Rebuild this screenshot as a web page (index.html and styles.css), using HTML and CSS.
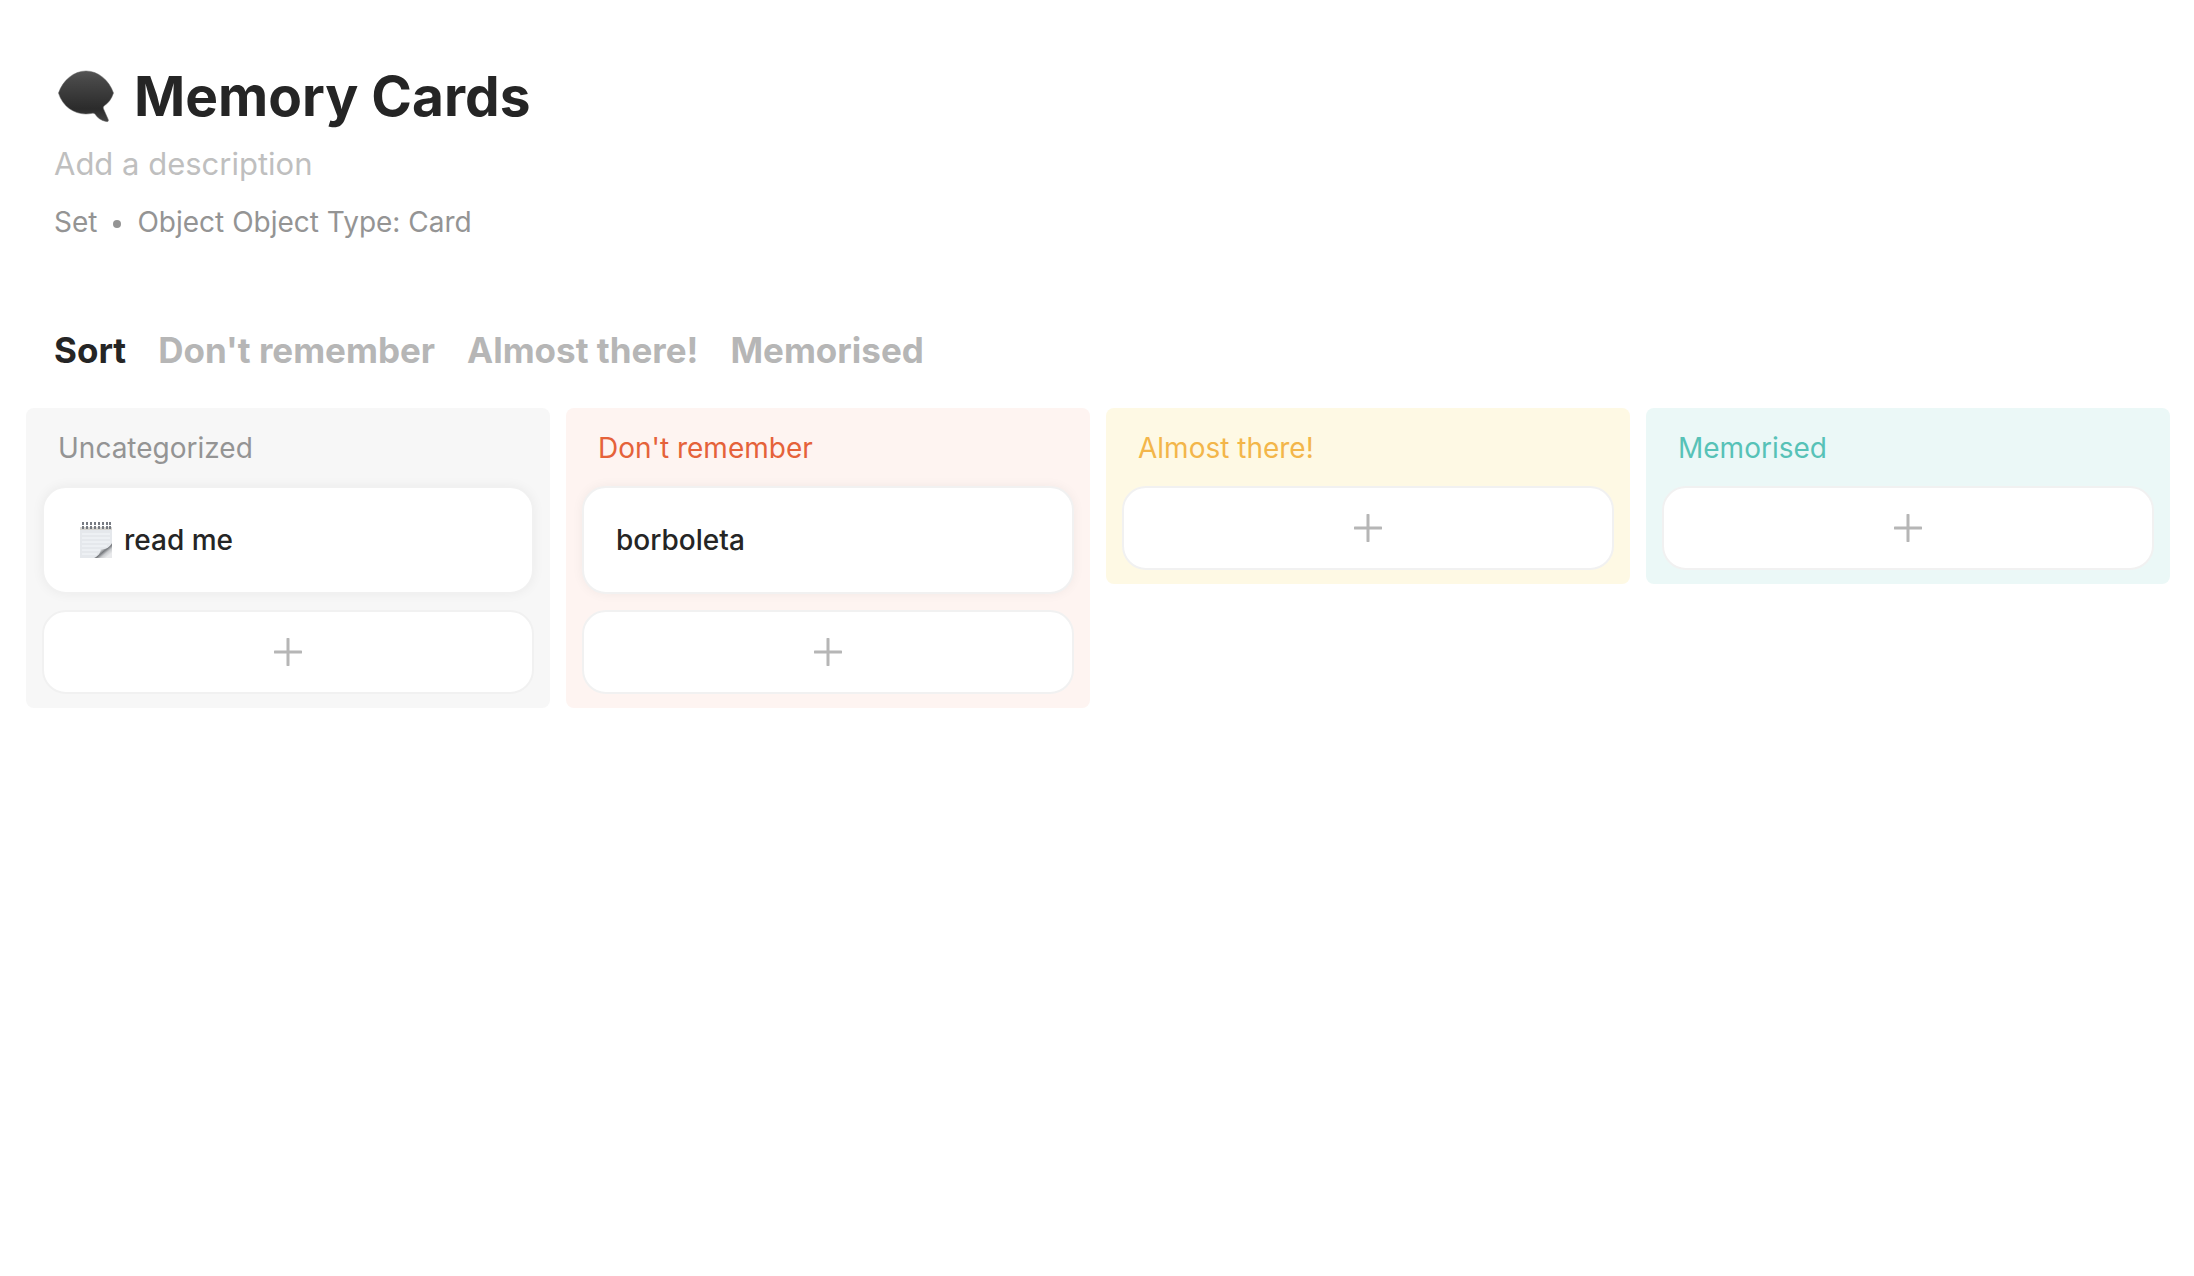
FILE: index.html
```html
<!DOCTYPE html>
<html lang="en">
<head>
<meta charset="utf-8">
<meta name="viewport" content="width=device-width, initial-scale=1">
<title>Memory Cards</title>
<link rel="stylesheet" href="styles.css">
</head>
<body>
<svg class="sprite" aria-hidden="true">
  <symbol id="plus" viewBox="0 0 28 28">
    <path d="M14 1v26M1 14h26" fill="none" stroke="currentColor" stroke-width="3" stroke-linecap="round"/>
  </symbol>
</svg>
<main class="page">
  <header class="head">
    <div class="title-row">
      <svg class="title-icon" viewBox="0 0 64 64" aria-hidden="true">
        <defs>
          <linearGradient id="bubble" x1="0" y1="0" x2="0" y2="1">
            <stop offset="0" stop-color="#555"/>
            <stop offset=".2" stop-color="#464646"/>
            <stop offset=".75" stop-color="#2b2b2b"/>
            <stop offset="1" stop-color="#444"/>
          </linearGradient>
        </defs>
        <path d="M4.500 29C9 16 20 7 32 7s23 9 27.500 22c-2 6-5 10-9.500 13-1 1-1 2 0 4l4 9c1 2 0 3-2 2.500-5-1-9-4-11-7.500-1-1-2-1-4-.5C23 52 9 44 4.500 29Z" fill="url(#bubble)" stroke="#666" stroke-opacity=".5"/>
      </svg>
      <h1 class="title">Memory Cards</h1>
    </div>
    <input class="description" type="text" placeholder="Add a description" aria-label="Description">
    <div class="meta"><span>Set</span><span class="dot"></span><span>Object Object Type: Card</span></div>
  </header>
  <nav class="views" aria-label="Views">
    <button class="view view-active" type="button" aria-current="true">Sort</button>
    <button class="view" type="button">Don't remember</button>
    <button class="view" type="button">Almost there!</button>
    <button class="view" type="button">Memorised</button>
  </nav>
  <div class="board">
    <section class="column grey">
      <h2 class="column-title">Uncategorized</h2>
      <article class="card">
        <svg class="card-icon" viewBox="0 0 32 36" aria-hidden="true">
          <defs>
            <linearGradient id="curl" x1="18" y1="24" x2="27" y2="35" gradientUnits="userSpaceOnUse">
              <stop offset=".1" stop-color="#fff"/>
              <stop offset=".35" stop-color="#d4d6d9"/>
              <stop offset=".55" stop-color="#777a7e"/>
              <stop offset=".75" stop-color="#c9cbce"/>
              <stop offset="1" stop-color="#e8e9eb"/>
            </linearGradient>
          </defs>
          <path d="M0 5h32v31H0Z" fill="#e5e8ec"/>
          <path d="M0 5h32v3H0Z" fill="#d5d4d0"/>
          <path d="M2 12h28M2 16h28M2 20h28M2 24h25M2 28h18M2 32h15" stroke="#f5f8fb"/>
          <path d="M14 36c4-2 6-4 7-9 4 1 8-1 11-6v15Z" fill="url(#curl)"/>
          <path d="M3 0v7M7 0v7M11 0v7M15 0v7M19 0v7M23 0v7M27 0v7M30 0v7" stroke="#777b82" stroke-width="2" stroke-dasharray="3 1"/>
        </svg>
        <span>read me</span>
      </article>
      <button class="add" type="button" aria-label="Add card to Uncategorized"><svg class="plus"><use href="#plus"/></svg></button>
    </section>
    <section class="column red">
      <h2 class="column-title">Don't remember</h2>
      <article class="card"><span>borboleta</span></article>
      <button class="add" type="button" aria-label="Add card to Don't remember"><svg class="plus"><use href="#plus"/></svg></button>
    </section>
    <section class="column yellow">
      <h2 class="column-title">Almost there!</h2>
      <button class="add" type="button" aria-label="Add card to Almost there!"><svg class="plus"><use href="#plus"/></svg></button>
    </section>
    <section class="column teal">
      <h2 class="column-title">Memorised</h2>
      <button class="add" type="button" aria-label="Add card to Memorised"><svg class="plus"><use href="#plus"/></svg></button>
    </section>
  </div>
</main>
</body>
</html>
```
FILE: styles.css
```css
* {
  box-sizing: border-box;
}

body {
  margin: 0;
  background: #fff;
  color: #252525;
  font-family: Inter, "Liberation Sans", sans-serif;
  font-size: 28px;
  line-height: 40px;
}

button,
input {
  padding: 0;
  border: 0;
  background: none;
  color: inherit;
  font: inherit;
}

.sprite {
  display: none;
}

.page {
  padding: 64px 24px 64px 26px;
}

.head {
  display: flex;
  flex-direction: column;
  padding: 0 28px;
}

.title-row {
  display: flex;
  align-items: center;
  gap: 16px;
}

.title-icon {
  width: 64px;
  height: 64px;
  flex: none;
}

.title {
  margin: 0;
  font-size: 55px;
  font-weight: 700;
  line-height: 64px;
}

.description {
  width: 100%;
  height: 44px;
  margin-top: 14px;
  font-size: 31px;
  line-height: 44px;
  outline: 0;
}

.description::placeholder {
  color: #bfbfbf;
  opacity: 1;
}

.meta {
  display: flex;
  align-items: center;
  gap: 16px;
  margin-top: 16px;
  color: #949494;
}

.dot {
  width: 8px;
  height: 8px;
  margin-top: 4px;
  border-radius: 50%;
  background: #949494;
}

.views {
  display: flex;
  flex-wrap: wrap;
  gap: 32px;
  margin-top: 86px;
  padding: 0 28px;
}

.view {
  color: #b6b6b6;
  font-size: 35px;
  font-weight: 700;
  line-height: 44px;
  cursor: pointer;
}

.view-active {
  color: #252525;
}

.board {
  display: grid;
  grid-template-columns: repeat(4, 1fr);
  align-items: start;
  gap: 16px;
  margin-top: 36px;
}

.column {
  display: flex;
  flex-direction: column;
  gap: 16px;
  padding: 20px 16px 14px;
  border-radius: 8px;
}

.column-title {
  margin: 0 0 2px;
  padding: 0 16px;
  font-size: 28px;
  font-weight: 400;
}

.grey {
  background: #f7f7f7;
}

.grey .column-title {
  color: #949494;
}

.red {
  background: #fef4f1;
}

.red .column-title {
  color: #e5623a;
}

.yellow {
  background: #fef9e4;
}

.yellow .column-title {
  color: #f3b64a;
}

.teal {
  background: #ebf8f7;
}

.teal .column-title {
  color: #57c2b7;
}

.card,
.add {
  display: flex;
  align-items: center;
  border: 2px solid #f1f1f1;
  border-radius: 24px;
  background: #fff;
}

.card {
  gap: 12px;
  min-height: 108px;
  padding: 0 32px;
  box-shadow: 0 0 12px rgba(0, 0, 0, 0.05);
  font-weight: 500;
}

.card-icon {
  width: 32px;
  height: 36px;
  margin-left: 4px;
  flex: none;
}

.add {
  justify-content: center;
  height: 84px;
  color: #b6b6b6;
  cursor: pointer;
}

.plus {
  width: 28px;
  height: 28px;
}
```
